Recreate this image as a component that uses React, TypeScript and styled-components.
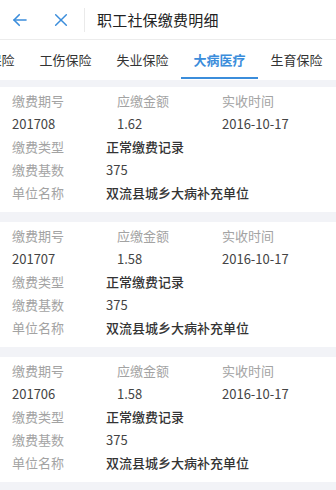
import React from "react";
import styled, { createGlobalStyle } from "styled-components";

const Global = createGlobalStyle`
  html, body { margin: 0; padding: 0; background: #f2f3f7; }
  body { font-family: "Noto Sans CJK SC", "Noto Sans", sans-serif; -webkit-font-smoothing: antialiased; }
  * { box-sizing: border-box; }
`;

const Page = styled.div`
  width: 336px;
  height: 490px;
  overflow: hidden;
  background: #f2f3f7;
  display: flex;
  flex-direction: column;
`;

const Header = styled.div`
  height: 40px;
  background: #fff;
  border-bottom: 1px solid #ececec;
  display: flex;
  align-items: center;
  padding-left: 11px;
`;

const IconButton = styled.button<{ gap: number }>`
  border: 0;
  background: transparent;
  padding: 0;
  width: 18px;
  height: 18px;
  display: flex;
  align-items: center;
  justify-content: center;
  margin-right: ${(p) => p.gap}px;
  color: #3b8ddb;
`;

const Divider = styled.div`
  width: 1px;
  height: 24px;
  background: #eaeaea;
  margin-right: 12px;
`;

const Title = styled.div`
  font-size: 15px;
  color: #222;
  letter-spacing: 0.2px;
`;

const TabBar = styled.div`
  height: 40px;
  background: #fff;
  overflow: hidden;
`;

const TabTrack = styled.div<{ offset: number }>`
  display: flex;
  height: 100%;
  margin-left: ${(p) => -p.offset}px;
`;

const Tab = styled.div<{ active?: boolean }>`
  flex: 0 0 77px;
  height: 100%;
  display: flex;
  align-items: center;
  justify-content: center;
  font-size: 13px;
  color: ${(p) => (p.active ? "#3b8ddb" : "#333")};
  font-weight: ${(p) => (p.active ? 700 : 400)};
  position: relative;
  padding-bottom: 1px;
  &::after {
    content: "";
    display: ${(p) => (p.active ? "block" : "none")};
    position: absolute;
    left: 0;
    right: 0;
    bottom: 1px;
    height: 2px;
    background: #3b8ddb;
  }
`;

const List = styled.div`
  display: flex;
  flex-direction: column;
  gap: 10px;
  padding-top: 7px;
`;

const Card = styled.div`
  background: #fff;
  height: 125px;
  padding: 2px 0 0 12px;
`;

const TopGrid = styled.div`
  display: grid;
  grid-template-columns: 105px 105px 1fr;
`;

const Row = styled.div`
  display: flex;
  align-items: center;
  height: 23px;
`;

const Cell = styled.div<{ muted?: boolean; w?: number }>`
  height: 23px;
  line-height: 23px;
  font-size: 13px;
  color: ${(p) => (p.muted ? "#a3a3a3" : "#444")};
  width: ${(p) => (p.w ? `${p.w}px` : "auto")};
  white-space: nowrap;
`;

const Strong = styled.div`
  font-size: 13px;
  color: #333;
  font-weight: 500;
  white-space: nowrap;
`;

const Plain = styled.div`
  font-size: 13px;
  color: #444;
`;

const records = [
  { period: "201708", amount: "1.62", date: "2016-10-17" },
  { period: "201707", amount: "1.58", date: "2016-10-17" },
  { period: "201706", amount: "1.58", date: "2016-10-17" },
];

const tabs = ["医疗保险", "工伤保险", "失业保险", "大病医疗", "生育保险"];

export default function App() {
  return (
    <>
      <Global />
      <Page>
        <Header>
          <IconButton gap={23}>
            <svg width="18" height="18" viewBox="0 0 24 24" fill="none" stroke="currentColor" strokeWidth="2.2" strokeLinecap="round" strokeLinejoin="round">
              <path d="M20 12H4" />
              <path d="M11 5l-7 7 7 7" />
            </svg>
          </IconButton>
          <IconButton gap={14}>
            <svg width="16" height="16" viewBox="0 0 24 24" fill="none" stroke="currentColor" strokeWidth="2.2" strokeLinecap="round">
              <path d="M4 4l16 16" />
              <path d="M20 4L4 20" />
            </svg>
          </IconButton>
          <Divider />
          <Title>职工社保缴费明细</Title>
        </Header>
        <TabBar>
          <TabTrack offset={50}>
            {tabs.map((t) => (
              <Tab key={t} active={t === "大病医疗"}>
                {t}
              </Tab>
            ))}
          </TabTrack>
        </TabBar>
        <List>
          {records.map((r) => (
            <Card key={r.period}>
              <TopGrid>
                <Cell muted>缴费期号</Cell>
                <Cell muted>应缴金额</Cell>
                <Cell muted>实收时间</Cell>
                <Cell>{r.period}</Cell>
                <Cell>{r.amount}</Cell>
                <Cell>{r.date}</Cell>
              </TopGrid>
              <Row>
                <Cell muted w={94}>缴费类型</Cell>
                <Strong>正常缴费记录</Strong>
              </Row>
              <Row>
                <Cell muted w={94}>缴费基数</Cell>
                <Plain>375</Plain>
              </Row>
              <Row>
                <Cell muted w={94}>单位名称</Cell>
                <Strong>双流县城乡大病补充单位</Strong>
              </Row>
            </Card>
          ))}
        </List>
      </Page>
    </>
  );
}
